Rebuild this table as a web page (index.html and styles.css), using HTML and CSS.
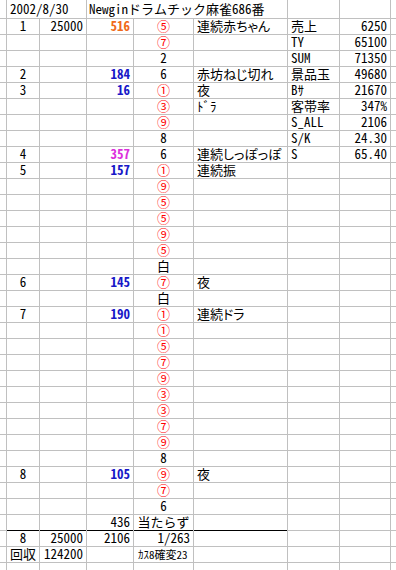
FILE: index.html
```html
<!DOCTYPE html>
<html lang="ja">
<head>
<meta charset="utf-8">
<title>ドラムチック麻雀</title>
<link rel="stylesheet" href="styles.css">
</head>
<body>
<div class="sheet">
  <div class="row first"><span class="c"></span><span class="c span2">2002/8/30</span><span class="c span3 tight">Newginドラムチック麻雀686番</span><span class="c"></span><span class="c"></span><span class="c"></span></div>
  <div class="row"><span class="c"></span><span class="c ctr">1</span><span class="c rt">25000</span><span class="c rt org">516</span><span class="c ctr red">⑤</span><span class="c jp">連続赤ちゃん</span><span class="c">売上</span><span class="c rt">6250</span><span class="c"></span></div>
  <div class="row"><span class="c"></span><span class="c"></span><span class="c"></span><span class="c"></span><span class="c ctr red">⑦</span><span class="c"></span><span class="c">TY</span><span class="c rt">65100</span><span class="c"></span></div>
  <div class="row"><span class="c"></span><span class="c"></span><span class="c"></span><span class="c"></span><span class="c ctr">2</span><span class="c"></span><span class="c">SUM</span><span class="c rt">71350</span><span class="c"></span></div>
  <div class="row"><span class="c"></span><span class="c ctr">2</span><span class="c"></span><span class="c rt blue">184</span><span class="c ctr">6</span><span class="c jp">赤坊ねじ切れ</span><span class="c">景品玉</span><span class="c rt">49680</span><span class="c"></span></div>
  <div class="row"><span class="c"></span><span class="c ctr">3</span><span class="c"></span><span class="c rt blue">16</span><span class="c ctr red">①</span><span class="c jp">夜</span><span class="c">Bｻ</span><span class="c rt">21670</span><span class="c"></span></div>
  <div class="row"><span class="c"></span><span class="c"></span><span class="c"></span><span class="c"></span><span class="c ctr red">③</span><span class="c">ﾄﾞﾗ</span><span class="c">客帯率</span><span class="c rt">347%</span><span class="c"></span></div>
  <div class="row"><span class="c"></span><span class="c"></span><span class="c"></span><span class="c"></span><span class="c ctr red">⑨</span><span class="c"></span><span class="c">S_ALL</span><span class="c rt">2106</span><span class="c"></span></div>
  <div class="row"><span class="c"></span><span class="c"></span><span class="c"></span><span class="c"></span><span class="c ctr">8</span><span class="c"></span><span class="c">S/K</span><span class="c rt">24.30</span><span class="c"></span></div>
  <div class="row"><span class="c"></span><span class="c ctr">4</span><span class="c"></span><span class="c rt mag">357</span><span class="c ctr">6</span><span class="c jp">連続しっぽっぽ</span><span class="c">S</span><span class="c rt">65.40</span><span class="c"></span></div>
  <div class="row"><span class="c"></span><span class="c ctr">5</span><span class="c"></span><span class="c rt blue">157</span><span class="c ctr red">①</span><span class="c jp">連続振</span><span class="c"></span><span class="c"></span><span class="c"></span></div>
  <div class="row"><span class="c"></span><span class="c"></span><span class="c"></span><span class="c"></span><span class="c ctr red">⑨</span><span class="c"></span><span class="c"></span><span class="c"></span><span class="c"></span></div>
  <div class="row"><span class="c"></span><span class="c"></span><span class="c"></span><span class="c"></span><span class="c ctr red">⑤</span><span class="c"></span><span class="c"></span><span class="c"></span><span class="c"></span></div>
  <div class="row"><span class="c"></span><span class="c"></span><span class="c"></span><span class="c"></span><span class="c ctr red">⑤</span><span class="c"></span><span class="c"></span><span class="c"></span><span class="c"></span></div>
  <div class="row"><span class="c"></span><span class="c"></span><span class="c"></span><span class="c"></span><span class="c ctr red">⑨</span><span class="c"></span><span class="c"></span><span class="c"></span><span class="c"></span></div>
  <div class="row"><span class="c"></span><span class="c"></span><span class="c"></span><span class="c"></span><span class="c ctr red">⑤</span><span class="c"></span><span class="c"></span><span class="c"></span><span class="c"></span></div>
  <div class="row"><span class="c"></span><span class="c"></span><span class="c"></span><span class="c"></span><span class="c ctr">白</span><span class="c"></span><span class="c"></span><span class="c"></span><span class="c"></span></div>
  <div class="row"><span class="c"></span><span class="c ctr">6</span><span class="c"></span><span class="c rt blue">145</span><span class="c ctr red">⑦</span><span class="c jp">夜</span><span class="c"></span><span class="c"></span><span class="c"></span></div>
  <div class="row"><span class="c"></span><span class="c"></span><span class="c"></span><span class="c"></span><span class="c ctr">白</span><span class="c"></span><span class="c"></span><span class="c"></span><span class="c"></span></div>
  <div class="row"><span class="c"></span><span class="c ctr">7</span><span class="c"></span><span class="c rt blue">190</span><span class="c ctr red">①</span><span class="c jp">連続ドラ</span><span class="c"></span><span class="c"></span><span class="c"></span></div>
  <div class="row"><span class="c"></span><span class="c"></span><span class="c"></span><span class="c"></span><span class="c ctr red">①</span><span class="c"></span><span class="c"></span><span class="c"></span><span class="c"></span></div>
  <div class="row"><span class="c"></span><span class="c"></span><span class="c"></span><span class="c"></span><span class="c ctr red">⑤</span><span class="c"></span><span class="c"></span><span class="c"></span><span class="c"></span></div>
  <div class="row"><span class="c"></span><span class="c"></span><span class="c"></span><span class="c"></span><span class="c ctr red">⑦</span><span class="c"></span><span class="c"></span><span class="c"></span><span class="c"></span></div>
  <div class="row"><span class="c"></span><span class="c"></span><span class="c"></span><span class="c"></span><span class="c ctr red">⑨</span><span class="c"></span><span class="c"></span><span class="c"></span><span class="c"></span></div>
  <div class="row"><span class="c"></span><span class="c"></span><span class="c"></span><span class="c"></span><span class="c ctr red">③</span><span class="c"></span><span class="c"></span><span class="c"></span><span class="c"></span></div>
  <div class="row"><span class="c"></span><span class="c"></span><span class="c"></span><span class="c"></span><span class="c ctr red">③</span><span class="c"></span><span class="c"></span><span class="c"></span><span class="c"></span></div>
  <div class="row"><span class="c"></span><span class="c"></span><span class="c"></span><span class="c"></span><span class="c ctr red">⑦</span><span class="c"></span><span class="c"></span><span class="c"></span><span class="c"></span></div>
  <div class="row"><span class="c"></span><span class="c"></span><span class="c"></span><span class="c"></span><span class="c ctr red">⑨</span><span class="c"></span><span class="c"></span><span class="c"></span><span class="c"></span></div>
  <div class="row"><span class="c"></span><span class="c"></span><span class="c"></span><span class="c"></span><span class="c ctr">8</span><span class="c"></span><span class="c"></span><span class="c"></span><span class="c"></span></div>
  <div class="row"><span class="c"></span><span class="c ctr">8</span><span class="c"></span><span class="c rt blue">105</span><span class="c ctr red">⑨</span><span class="c jp">夜</span><span class="c"></span><span class="c"></span><span class="c"></span></div>
  <div class="row"><span class="c"></span><span class="c"></span><span class="c"></span><span class="c"></span><span class="c ctr red">⑦</span><span class="c"></span><span class="c"></span><span class="c"></span><span class="c"></span></div>
  <div class="row"><span class="c"></span><span class="c"></span><span class="c"></span><span class="c"></span><span class="c ctr">6</span><span class="c"></span><span class="c"></span><span class="c"></span><span class="c"></span></div>
  <div class="row sep"><span class="c"></span><span class="c"></span><span class="c"></span><span class="c rt">436</span><span class="c ctr">当たらず</span><span class="c"></span><span class="c"></span><span class="c"></span><span class="c"></span></div>
  <div class="row"><span class="c"></span><span class="c ctr">8</span><span class="c rt">25000</span><span class="c rt">2106</span><span class="c rt">1/263</span><span class="c"></span><span class="c"></span><span class="c"></span><span class="c"></span></div>
  <div class="row"><span class="c"></span><span class="c ctr">回収</span><span class="c rt">124200</span><span class="c"></span><span class="c small">ｶｽ8確変23</span><span class="c"></span><span class="c"></span><span class="c"></span><span class="c"></span></div>
  <div class="row"><span class="c"></span><span class="c"></span><span class="c"></span><span class="c"></span><span class="c"></span><span class="c"></span><span class="c"></span><span class="c"></span><span class="c"></span></div>
</div>
</body>
</html>
```
FILE: styles.css
```css
body {
  margin: 0;
  background: #fff;
  color: #000;
  font-family: "Noto Sans Mono CJK JP", "Noto Sans CJK JP", monospace;
  font-size: 13px;
}

.sheet {
  width: 396px;
  height: 570px;
  overflow: hidden;
}

.row {
  display: grid;
  grid-template-columns: 7px 33px 47px 47px 60px 94px 52px 51px 6px;
  height: 16px;
}

.row.first {
  height: 18px;
}

.c {
  box-sizing: border-box;
  height: 100%;
  border-right: 1px solid #c0c0c0;
  border-bottom: 1px solid #c0c0c0;
  padding: 0 3px;
  line-height: 16px;
  white-space: nowrap;
  overflow: visible;
}

.first .c {
  line-height: 18px;
}

.c:last-child {
  border-right: 0;
}

.span2 {
  grid-column: span 2;
}

.span3 {
  grid-column: span 3;
}

.tight {
  padding-left: 2px;
}

.ctr {
  text-align: center;
  padding: 0;
}

.rt {
  text-align: right;
}

.jp {
  font-family: "Noto Sans CJK JP", sans-serif;
  font-feature-settings: "palt";
}

.red {
  color: #ff0000;
}

.blue {
  color: #1818c8;
  font-weight: bold;
}

.org {
  color: #f06a1a;
  font-weight: bold;
}

.mag {
  color: #dc30dc;
  font-weight: bold;
}

.small {
  font-size: 11px;
  padding-left: 4px;
}

.sep .c:nth-child(n+2):nth-child(-n+6) {
  border-bottom-color: #000;
}
```
